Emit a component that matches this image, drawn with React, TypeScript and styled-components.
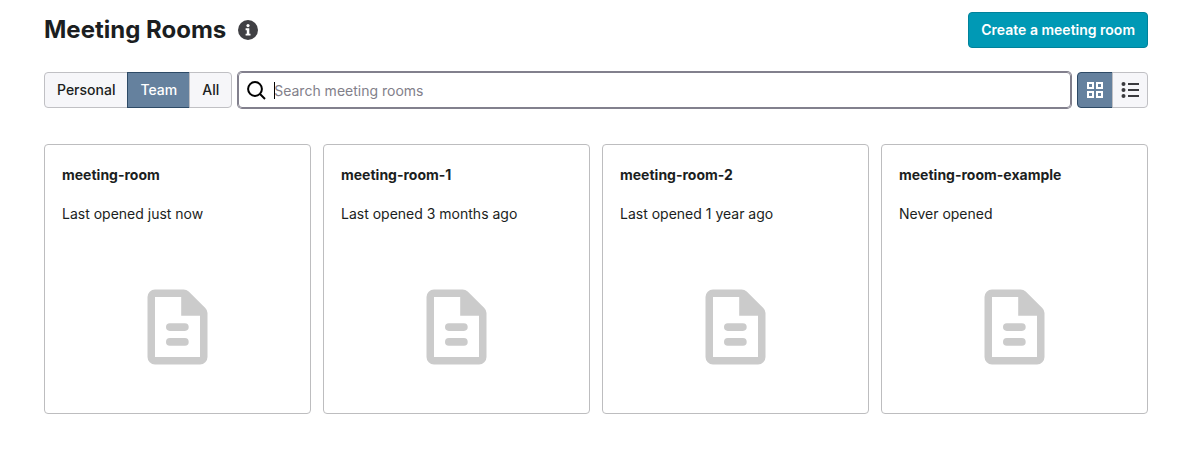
import React, { useState } from "react";
import styled, { createGlobalStyle, css } from "styled-components";

const GlobalStyle = createGlobalStyle`
  *, *::before, *::after { box-sizing: border-box; }
  body {
    margin: 0;
    background: #fff;
    color: #1b1e21;
    font-family: Inter, "Liberation Sans", sans-serif;
    font-size: 14px;
    line-height: 20px;
    -webkit-font-smoothing: antialiased;
  }
  button, input { font: inherit; color: inherit; }
`;

const Page = styled.main`
  padding: 12px 39px 35px 44px;
`;

const Header = styled.header`
  display: flex;
  align-items: center;
  justify-content: space-between;
`;

const Heading = styled.div`
  display: flex;
  align-items: center;
  gap: 12px;
`;

const Title = styled.h1`
  margin: 0;
  font-size: 24px;
  line-height: 36px;
  font-weight: 700;
`;

const InfoButton = styled.button`
  display: flex;
  padding: 0;
  border: 0;
  background: none;
`;

const PrimaryButton = styled.button`
  height: 36px;
  padding: 0 12px;
  border: 1px solid #00829b;
  border-radius: 4px;
  background: #0099b5;
  color: #fff;
  font-weight: 600;
`;

const Toolbar = styled.div`
  display: flex;
  gap: 6px;
  margin-top: 24px;
`;

const Segments = styled.div`
  display: flex;
`;

const Segment = styled.button<{ $active: boolean; $icon?: boolean }>`
  display: flex;
  align-items: center;
  justify-content: center;
  height: 36px;
  padding: 0 12px;
  border: 1px solid #c0c0c4;
  background: #f6f6f9;
  font-weight: 500;

  & + & { margin-left: -1px; }
  &:first-child { border-radius: 4px 0 0 4px; }
  &:last-child { border-radius: 0 4px 4px 0; }

  ${(p) => p.$icon && css`width: 36px; padding: 0;`}
  ${(p) => p.$active && css`
    border-color: #2d4a66;
    background: #65819e;
    color: #fff;
  `}
`;

const SearchField = styled.label`
  position: relative;
  display: flex;
  flex: 1;
  align-items: center;
  gap: 8px;
  height: 36px;
  padding: 0 8px;
  border: 1px solid #82808d;
  border-radius: 4px;
  box-shadow: 0 0 0 1px #82808d;
`;

const SearchInput = styled.input`
  flex: 1;
  min-width: 0;
  padding: 2px 0 0;
  border: 0;
  outline: 0;
  background: none;
  &::placeholder { color: #82808a; opacity: 1; }
`;

const Caret = styled.span`
  position: absolute;
  left: 35px;
  width: 1px;
  height: 17px;
  background: #000;
`;

const Cards = styled.section`
  display: grid;
  grid-template-columns: repeat(4, 1fr);
  gap: 12px;
  margin-top: 36px;
`;

const Card = styled.article`
  display: flex;
  flex-direction: column;
  padding: 20px 17px 42px;
  border: 1px solid #bdbdbf;
  border-radius: 4px;
`;

const CardTitle = styled.h2`
  margin: 0;
  font-size: 14px;
  line-height: 20px;
  font-weight: 700;
`;

const CardMeta = styled.p`
  margin: 19px 0 59px;
`;

const DocumentIcon = styled.svg`
  align-self: center;
`;

const rooms = [
  { name: "meeting-room", opened: "Last opened just now" },
  { name: "meeting-room-1", opened: "Last opened 3 months ago" },
  { name: "meeting-room-2", opened: "Last opened 1 year ago" },
  { name: "meeting-room-example", opened: "Never opened" },
];

const scopes = ["Personal", "Team", "All"];

export default function App() {
  const [scope, setScope] = useState("Team");
  const [view, setView] = useState("grid");
  const [query, setQuery] = useState("");

  return (
    <>
      <GlobalStyle />
      <Page>
        <Header>
          <Heading>
            <Title>Meeting Rooms</Title>
            <InfoButton type="button" aria-label="About meeting rooms">
              <svg width="20" height="20" viewBox="0 0 20 20" aria-hidden="true">
                <circle cx="10" cy="10" r="10" fill="#404044" />
                <circle cx="10" cy="5.6" r="1.6" fill="#fff" />
                <path d="M7.6 8.3h3.7v5.4h1.2v1.9H7.6v-1.9h1.2v-3.5H7.6z" fill="#fff" />
              </svg>
            </InfoButton>
          </Heading>
          <PrimaryButton type="button">Create a meeting room</PrimaryButton>
        </Header>

        <Toolbar>
          <Segments role="group" aria-label="Room scope">
            {scopes.map((s) => (
              <Segment key={s} type="button" $active={s === scope} aria-pressed={s === scope} onClick={() => setScope(s)}>
                {s}
              </Segment>
            ))}
          </Segments>
          <SearchField>
            <svg width="19" height="19" viewBox="0 0 19 19" fill="none" stroke="#000" strokeWidth="2" aria-hidden="true">
              <circle cx="8" cy="8" r="6.9" />
              <path d="M13 13l5 5" />
            </svg>
            <SearchInput
              type="text"
              aria-label="Search meeting rooms"
              placeholder="Search meeting rooms"
              value={query}
              onChange={(e) => setQuery(e.target.value)}
            />
            {query === "" && <Caret />}
          </SearchField>
          <Segments role="group" aria-label="View">
            <Segment type="button" $icon $active={view === "grid"} aria-label="Grid view" aria-pressed={view === "grid"} onClick={() => setView("grid")}>
              <svg width="16" height="16" viewBox="0 0 16 16" fill="none" stroke="currentColor" strokeWidth="2" aria-hidden="true">
                <path d="M1 1h5v5H1zM10 1h5v5h-5zM1 10h5v5H1zM10 10h5v5h-5z" />
              </svg>
            </Segment>
            <Segment type="button" $icon $active={view === "list"} aria-label="List view" aria-pressed={view === "list"} onClick={() => setView("list")}>
              <svg width="18" height="16" viewBox="0 0 18 16" fill="#3a3a3e" aria-hidden="true">
                <circle cx="2.5" cy="2" r="2" />
                <circle cx="2.5" cy="8" r="2" />
                <circle cx="2.5" cy="14" r="2" />
                <path d="M7 1h11v2H7zM7 7h11v2H7zM7 13h11v2H7z" />
              </svg>
            </Segment>
          </Segments>
        </Toolbar>

        <Cards>
          {rooms.map((room) => (
            <Card key={room.name}>
              <CardTitle>{room.name}</CardTitle>
              <CardMeta>{room.opened}</CardMeta>
              <DocumentIcon width="61" height="88" viewBox="-0.5 -0.5 61 88" aria-hidden="true">
                <path
                  fill="#cbcbcb"
                  fillRule="evenodd"
                  d="M7.5 6H36q3 0 5.2 2L57.8 24.5q2.2 2.2 2.2 5V73.5a7.5 7.5 0 0 1-7.5 7.5h-45A7.5 7.5 0 0 1 0 73.500v-60A7.500 7.500 0 0 1 7.500 6zM7.500 13.500v60h45V32.300H33.700V13.500z"
                />
                <rect x="18.500" y="39.800" width="22.700" height="7.600" rx="3.800" fill="#cbcbcb" />
                <rect x="18.500" y="54.600" width="22.700" height="7.600" rx="3.800" fill="#cbcbcb" />
              </DocumentIcon>
            </Card>
          ))}
        </Cards>
      </Page>
    </>
  );
}
